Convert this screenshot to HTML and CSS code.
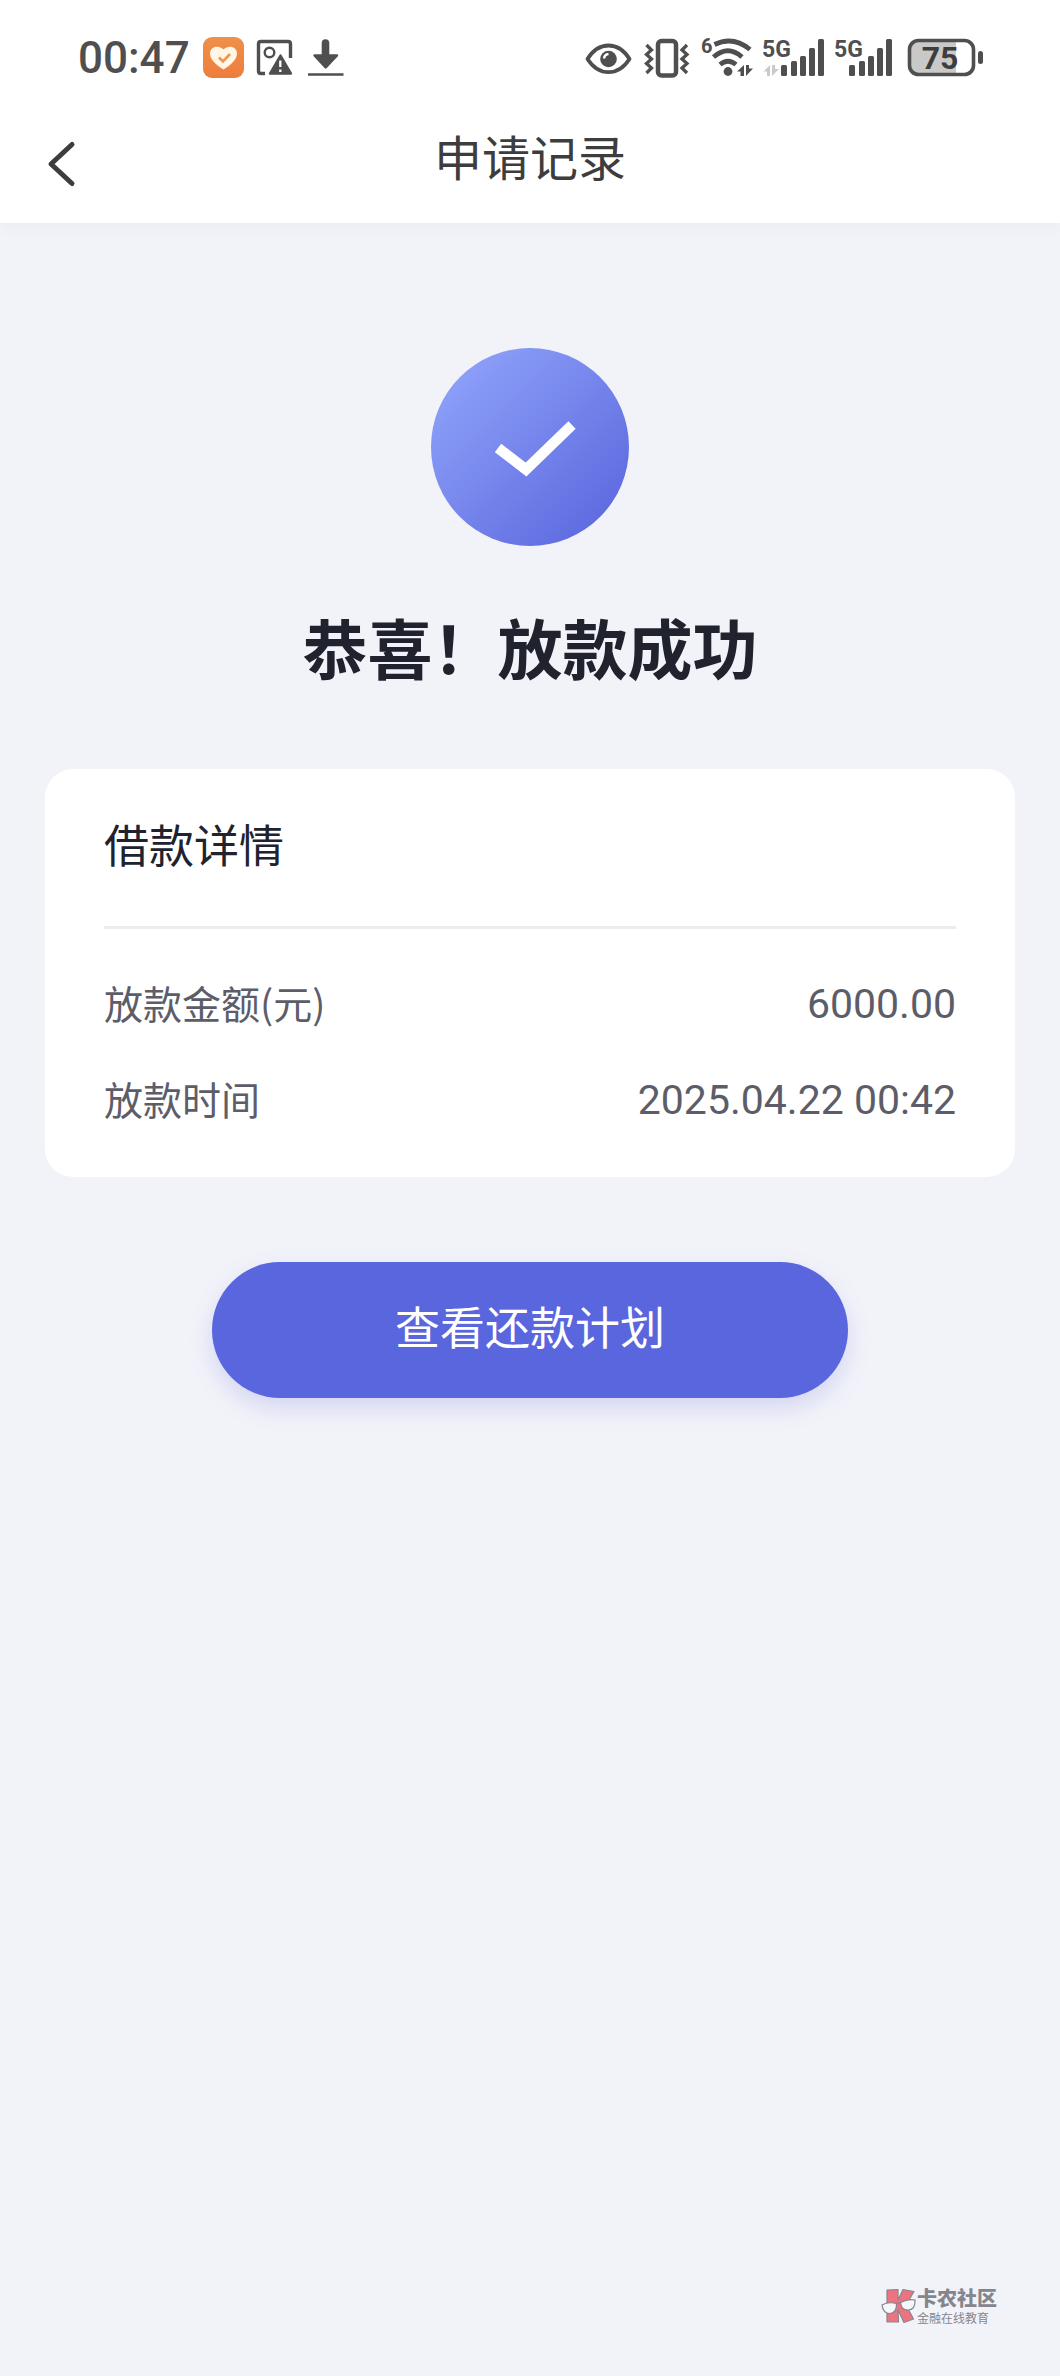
FILE: index.html
```html
<!DOCTYPE html>
<html lang="zh-CN">
<head>
<meta charset="utf-8">
<meta name="viewport" content="width=device-width, initial-scale=1">
<title>申请记录</title>
<link rel="stylesheet" href="styles.css">
</head>
<body>
<div class="page">
  <header class="header">
    <div class="status">
      <div class="status-left">
        <time class="clock">00:47</time>
        <svg width="41" height="42" viewBox="203 37 41 42" aria-hidden="true">
          <defs><linearGradient id="heart-bg" x1="0" y1="0" x2="0" y2="1"><stop offset="0" stop-color="#f0904a"/><stop offset="1" stop-color="#ee7d3c"/></linearGradient></defs>
          <rect x="203" y="37" width="41" height="41" rx="9" fill="url(#heart-bg)"/>
          <path d="M223.500 69.500C216 65 210 59.500 210 53.500C210 46.500 218.500 44.500 223.500 49.500C228.500 44.500 237 46.500 237 53.500C237 59.500 231 65 223.500 69.500Z" fill="#fff6e6"/>
          <path d="M219 57.500l4 4 7-7.500" fill="none" stroke="#f0944f" stroke-width="2.600"/>
        </svg>
        <svg width="36" height="42" viewBox="257 37 36 42" aria-hidden="true">
          <path d="M265 73.500H261Q258.500 73.500 258.500 71V44Q258.500 41.500 261 41.500H288Q290.500 41.500 290.500 44V58" fill="none" stroke="#4f4f4f" stroke-width="3.400"/>
          <circle cx="269.500" cy="52.500" r="4.800" fill="none" stroke="#4f4f4f" stroke-width="2.400"/>
          <path d="M280.500 55.500L291 73.500H270Z" fill="#4f4f4f" stroke="#4f4f4f" stroke-width="2.400" stroke-linejoin="round"/>
          <path d="M280.300 60.500v6.500M280.300 69.500v2.600" stroke="#fff" stroke-width="2.300"/>
        </svg>
        <svg width="38" height="42" viewBox="306 37 38 42" aria-hidden="true">
          <path d="M325.500 43V57" stroke="#4f4f4f" stroke-width="7.600" stroke-linecap="round"/>
          <path d="M314.500 55.500H337L325.700 67.500Z" fill="#4f4f4f" stroke="#4f4f4f" stroke-width="2.400" stroke-linejoin="round"/>
          <path d="M308 74.500H343.500" stroke="#4f4f4f" stroke-width="2.600"/>
        </svg>
      </div>
      <div class="status-right">
        <svg width="47" height="42" viewBox="586 37 47 42" aria-hidden="true">
          <path d="M587.500 59Q596 45.500 608.500 45.500T629.500 59Q621 72.200 608.500 72.200T587.500 59Z" fill="none" stroke="#4f4f4f" stroke-width="3.800" stroke-linejoin="round"/>
          <circle cx="608.500" cy="59" r="8.300" fill="#4f4f4f"/>
          <path d="M604 58.500Q604.500 54.500 608.500 54" fill="none" stroke="#fff" stroke-width="2.400"/>
        </svg>
        <svg width="47" height="42" viewBox="643 37 47 42" aria-hidden="true">
          <rect x="658" y="41" width="18" height="34.500" rx="3.500" fill="none" stroke="#4f4f4f" stroke-width="4.500"/>
          <path d="M646.500 45l5 5-5 4.500 5 4.500-5 4.500 5 4.500-5 5M687 45l-5 5 5 4.500-5 4.500 5 4.500-5 4.500 5 5" fill="none" stroke="#4f4f4f" stroke-width="3.300"/>
        </svg>
        <svg width="53" height="42" viewBox="700 37 53 42" aria-hidden="true">
          <text x="701" y="53" class="tiny-label">6</text>
          <g fill="none" stroke="#4f4f4f" stroke-width="4.800">
            <path d="M714.500 44.500Q733 35.500 750 49.500"/>
            <path d="M713.500 57Q728 44.500 742 57"/>
            <path d="M720 64.500Q728 58 736 64.500"/>
          </g>
          <circle cx="728" cy="71.500" r="4.400" fill="#4f4f4f"/>
          <path d="M737 71.500L744 65V76H740.500V71.500ZM746 65H749V68.500H753L746 76Z" fill="#4f4f4f"/>
        </svg>
        <svg width="62" height="42" viewBox="763 37 62 42" aria-hidden="true">
          <text x="762" y="57" class="net-label">5G</text>
          <path d="M763.500 71.500L770 65V76H767V71.500ZM772 65H775V69H779L772 76Z" fill="#cacaca"/>
          <g fill="#4f4f4f">
            <rect x="781" y="65" width="6" height="11" rx="1.500"/><rect x="791" y="61" width="6" height="15" rx="1.500"/><rect x="800" y="56" width="6" height="20" rx="1.500"/><rect x="809" y="48" width="6" height="28" rx="1.500"/><rect x="818" y="39" width="6" height="37" rx="1.500"/>
          </g>
        </svg>
        <svg width="58" height="42" viewBox="835 37 58 42" aria-hidden="true">
          <text x="834" y="57" class="net-label">5G</text>
          <g fill="#4f4f4f">
            <rect x="849" y="65" width="6" height="11" rx="1.500"/><rect x="859" y="61" width="6" height="15" rx="1.500"/><rect x="868" y="56" width="6" height="20" rx="1.500"/><rect x="877" y="48" width="6" height="28" rx="1.500"/><rect x="886" y="39" width="6" height="37" rx="1.500"/>
          </g>
        </svg>
        <svg width="80" height="42" viewBox="903 37 80 42" aria-hidden="true">
          <path d="M956 41H918Q909.500 41 909.500 49.500V66Q909.500 74.500 918 74.500H956Z" fill="#c9c9c9"/>
          <rect x="909.500" y="40.500" width="64" height="34" rx="9" fill="none" stroke="#4f4f4f" stroke-width="3.600"/>
          <rect x="978" y="51" width="5" height="13" rx="2.500" fill="#4f4f4f"/>
          <text x="940" y="69" text-anchor="middle" class="battery-label">75</text>
        </svg>
      </div>
    </div>
    <nav class="nav">
      <button class="back" type="button" aria-label="返回">
        <svg width="32" height="54" viewBox="45 137 32 54" aria-hidden="true"><path d="M72 144.500L51 164L72 183.500" fill="none" stroke="#3d3d3d" stroke-width="5" stroke-linecap="round" stroke-linejoin="round"/></svg>
      </button>
      <h1 class="nav-title">申请记录</h1>
    </nav>
  </header>

  <main class="main">
    <svg class="success" width="198" height="198" viewBox="0 0 198 198" aria-hidden="true">
      <defs><linearGradient id="disc" x1="0.100" y1="0.150" x2="0.850" y2="0.900"><stop offset="0" stop-color="#8c9ff8"/><stop offset="1" stop-color="#5f6be0"/></linearGradient></defs>
      <circle cx="99" cy="99" r="99" fill="url(#disc)"/>
      <path d="M67 100L95 121.500L141 77" fill="none" stroke="#fff" stroke-width="10.500"/>
    </svg>
    <h2 class="headline">恭喜！放款成功</h2>

    <section class="card">
      <h3 class="card-title">借款详情</h3>
      <dl class="rows">
        <div class="row"><dt>放款金额(元)</dt><dd>6000.00</dd></div>
        <div class="row"><dt>放款时间</dt><dd>2025.04.22 00:42</dd></div>
      </dl>
    </section>

    <button class="primary" type="button">查看还款计划</button>
  </main>

  <footer class="brand">
    <svg width="36" height="36" viewBox="0 0 36 36" aria-hidden="true">
      <path d="M6 2L17 1.500V12L22 1.500L33 3.500L25 17L32.500 31L23 34.500L17 22L17.500 34H6Z" fill="#ec7480" stroke="#85868d" stroke-width="1.200" stroke-linejoin="round"/>
      <g fill="#f7f7fb" stroke="#85868d" stroke-width="1.200">
        <path d="M1 17Q7 13.500 15.500 15.500Q16 25 9 25.500Q2 25.500 1 17Z"/>
        <path d="M19.500 14.500Q27 10.500 34 12Q34.500 21.500 27.500 22Q20.500 22.500 19.500 14.500Z"/>
        <path d="M15.500 15.500L19.500 14.500"/>
      </g>
    </svg>
    <div class="brand-text">
      <strong class="brand-name">卡农社区</strong>
      <span class="brand-tag">金融在线教育</span>
    </div>
  </footer>
</div>
</body>
</html>
```

FILE: styles.css
```css
* {
  box-sizing: border-box;
}

body {
  margin: 0;
  background: #f2f3f9;
  font-family: "Noto Sans CJK SC", sans-serif;
  color: #20232e;
}

h1, h2, h3, dl, dd {
  margin: 0;
  font-weight: 400;
}

button {
  border: 0;
  padding: 0;
  background: none;
  font: inherit;
  cursor: pointer;
}

svg {
  display: block;
  flex: none;
  overflow: visible;
}

.page {
  min-height: 100vh;
  display: flex;
  flex-direction: column;
}

.header {
  background: #fff;
  box-shadow: 0 2px 16px rgba(60, 70, 120, 0.05);
}

.status {
  display: flex;
  justify-content: space-between;
  align-items: center;
  padding: 36px 77px 16px 78px;
}

.status-left {
  display: flex;
  align-items: center;
  gap: 13px;
}

.status-right {
  display: flex;
  align-items: center;
  gap: 10px;
}

.clock {
  font: 500 44px/44px Roboto, sans-serif;
  color: #4f4f4f;
}

.tiny-label {
  font: 700 20px Roboto, sans-serif;
  fill: #4f4f4f;
}

.net-label {
  font: 700 23px Roboto, sans-serif;
  fill: #4f4f4f;
}

.battery-label {
  font: 700 32px Roboto, sans-serif;
  fill: #3d3d3d;
}

.nav {
  display: grid;
  grid-template-columns: 80px 1fr 80px;
  align-items: center;
  padding: 22px 0 30px;
}

.back {
  justify-self: end;
  margin-right: 3px;
  padding-top: 16px;
}

.nav-title {
  font-size: 48px;
  line-height: 75px;
  text-align: center;
  color: #3d3d3d;
}

.main {
  display: flex;
  flex-direction: column;
  align-items: center;
  padding: 125px 0 80px;
}

.headline {
  margin-top: 52px;
  font-size: 65px;
  line-height: 96px;
  font-weight: 700;
}

.card {
  width: calc(100% - 90px);
  margin-top: 75px;
  padding: 0 59px 31px;
  border-radius: 28px;
  background: #fff;
}

.card-title {
  padding: 43px 0 50px;
  border-bottom: 3px solid #ececee;
  font-size: 45px;
  line-height: 64px;
}

.rows {
  padding-top: 25px;
}

.row {
  display: flex;
  justify-content: space-between;
  align-items: center;
  line-height: 96px;
  font-size: 39px;
  color: #5c5d69;
}

.row dd {
  padding-top: 4px;
  font-family: Roboto, "Noto Sans CJK SC", sans-serif;
  font-size: 41px;
  line-height: 92px;
}

.primary {
  width: 60%;
  margin-top: 85px;
  padding: 32px 0 40px;
  border-radius: 68px;
  background: #5966de;
  box-shadow: 0 10px 24px rgba(89, 102, 222, 0.2);
  font-size: 45px;
  line-height: 64px;
  color: #fff;
}

.brand {
  display: flex;
  justify-content: flex-end;
  align-items: center;
  margin-top: auto;
  padding: 0 63px 50px 0;
}

.brand-text {
  display: flex;
  flex-direction: column;
  color: #85868d;
}

.brand-name {
  font-size: 20px;
  line-height: 24px;
  font-weight: 900;
}

.brand-tag {
  font-size: 12px;
  line-height: 16px;
}
```
